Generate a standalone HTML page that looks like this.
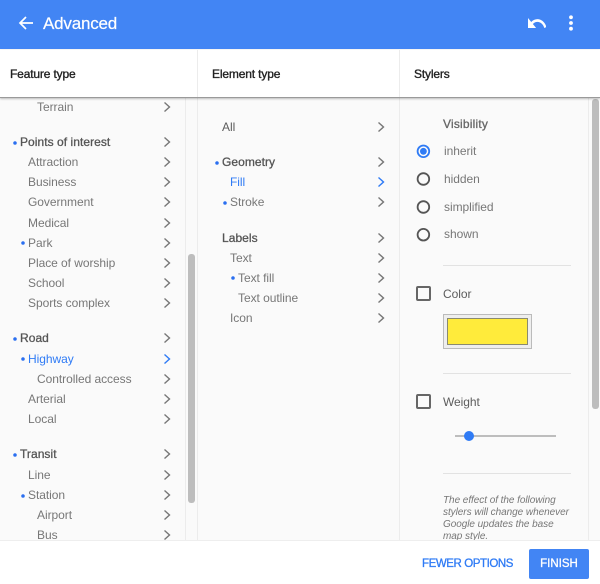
<!DOCTYPE html>
<html><head><meta charset="utf-8"><style>
html,body{margin:0;padding:0}
body{width:600px;height:584px;position:relative;overflow:hidden;background:#fafafa;font-family:"Liberation Sans",sans-serif}
.a{position:absolute}
.hd{left:0;top:0;width:600px;height:49px;background:#4285f4}
.sub{left:0;top:50px;width:600px;height:47px;background:#fff;border-bottom:1px solid #9a9a9a;box-shadow:0 1px 2px rgba(0,0,0,.25);z-index:3}
.h{position:absolute;top:16px;font-size:12px;line-height:16px;color:#222;-webkit-text-stroke:.35px #222;letter-spacing:-.15px}
.v{position:absolute;width:1px;background:#ececec}
.t{position:absolute;font-size:12px;line-height:16px;color:#777;white-space:nowrap;letter-spacing:-.05px}
.b{color:#555;-webkit-text-stroke:.3px #555;letter-spacing:.05px}
.m{color:#5c5c5c}
.blue{color:#2f7bf5}
.d{position:absolute;width:4px;height:4px;border-radius:50%;background:#2a6ff0;transform:scale(.88)}
svg.c{position:absolute;width:8px;height:12px;fill:none;stroke:#777;stroke-width:1.4}
.foot{left:0;top:540px;width:600px;height:44px;background:#fff;border-top:1px solid #eee;z-index:4;box-sizing:border-box}
.sb{position:absolute;background:#bdbdbd;border-radius:3px;width:6.500px}
.rule{position:absolute;left:443px;width:128px;height:1px;background:#e2e2e2}
svg.r{position:absolute;left:416px;width:15px;height:15px;fill:none;stroke:#555;stroke-width:1.800}
.k{position:absolute;left:416px;width:11px;height:11px;border:2px solid #666;border-radius:2px}
</style></head><body>
<div class="a hd"></div>
<svg class="a" style="left:17px;top:14px" width="18" height="18" viewBox="0 0 18 18" fill="none" stroke="#fff" stroke-width="1.7"><path d="M16 9H3M9 3L3 9l6 6"/></svg>
<div class="a" style="left:43px;top:13px;font-size:17px;line-height:21px;color:#fff;letter-spacing:-.2px;-webkit-text-stroke:.2px #fff">Advanced</div>
<svg class="a" style="left:528px;top:18px" width="18" height="10" viewBox="2 7 20 9" preserveAspectRatio="none"><path d="M12.500 8c-2.650 0-5.050.99-6.900 2.600L2 7v9h9l-3.620-3.620c1.390-1.160 3.160-1.880 5.120-1.880 3.540 0 6.550 2.310 7.600 5.500l2.370-.78C21.080 11.030 17.150 8 12.500 8z" fill="#fff"/></svg>
<svg class="a" style="left:567px;top:15px" width="8" height="16" viewBox="0 0 8 16" fill="#fff"><circle cx="4" cy="2.300" r="1.900"/><circle cx="4" cy="8" r="1.900"/><circle cx="4" cy="13.700" r="1.900"/></svg>

<div class="a sub">
<div class="h" style="left:10px">Feature type</div>
<div class="h" style="left:212px">Element type</div>
<div class="h" style="left:414px">Stylers</div>
<div class="v" style="left:197px;top:0;height:47px"></div>
<div class="v" style="left:399px;top:0;height:47px"></div>
</div>

<div class="v" style="left:185px;top:98px;height:442px"></div>
<div class="v" style="left:197px;top:98px;height:442px"></div>
<div class="v" style="left:399px;top:98px;height:442px"></div>
<div class="v" style="left:588px;top:98px;height:442px"></div>
<div class="sb" style="left:188px;top:254px;height:249px"></div>
<div class="sb" style="left:592px;top:99px;height:310px"></div>

<div class="t" style="left:37px;top:99px">Terrain</div>
<div class="t b" style="left:20px;top:134px">Points of interest</div><div class="d" style="left:13px;top:140.500px"></div>
<div class="t" style="left:28px;top:154px">Attraction</div>
<div class="t" style="left:28px;top:174px">Business</div>
<div class="t" style="left:28px;top:194px">Government</div>
<div class="t" style="left:28px;top:215px">Medical</div>
<div class="t" style="left:28px;top:235px">Park</div><div class="d" style="left:21.300px;top:241.300px"></div>
<div class="t" style="left:28px;top:255px">Place of worship</div>
<div class="t" style="left:28px;top:275px">School</div>
<div class="t" style="left:28px;top:295px">Sports complex</div>
<div class="t b" style="left:20px;top:330px">Road</div><div class="d" style="left:13px;top:337.300px"></div>
<div class="t blue" style="left:28px;top:351px">Highway</div><div class="d" style="left:21.300px;top:357.300px"></div>
<div class="t" style="left:37px;top:371px">Controlled access</div>
<div class="t" style="left:28px;top:391px">Arterial</div>
<div class="t" style="left:28px;top:411px">Local</div>
<div class="t b" style="left:20px;top:446px">Transit</div><div class="d" style="left:13px;top:453px"></div>
<div class="t" style="left:28px;top:467px">Line</div>
<div class="t" style="left:28px;top:487px">Station</div><div class="d" style="left:21.300px;top:493.700px"></div>
<div class="t" style="left:37px;top:507px">Airport</div>
<div class="t" style="left:37px;top:527px">Bus</div>

<svg class="c" style="left:163px;top:101px" viewBox="0 0 8 12"><path d="M1.500 1.500L6.500 6l-5 4.500"/></svg>
<svg class="c" style="left:163px;top:136px" viewBox="0 0 8 12"><path d="M1.500 1.500L6.500 6l-5 4.500"/></svg>
<svg class="c" style="left:163px;top:156px" viewBox="0 0 8 12"><path d="M1.500 1.500L6.500 6l-5 4.500"/></svg>
<svg class="c" style="left:163px;top:176px" viewBox="0 0 8 12"><path d="M1.500 1.500L6.500 6l-5 4.500"/></svg>
<svg class="c" style="left:163px;top:196px" viewBox="0 0 8 12"><path d="M1.500 1.500L6.500 6l-5 4.500"/></svg>
<svg class="c" style="left:163px;top:217px" viewBox="0 0 8 12"><path d="M1.500 1.500L6.500 6l-5 4.500"/></svg>
<svg class="c" style="left:163px;top:237px" viewBox="0 0 8 12"><path d="M1.500 1.500L6.500 6l-5 4.500"/></svg>
<svg class="c" style="left:163px;top:257px" viewBox="0 0 8 12"><path d="M1.500 1.500L6.500 6l-5 4.500"/></svg>
<svg class="c" style="left:163px;top:277px" viewBox="0 0 8 12"><path d="M1.500 1.500L6.500 6l-5 4.500"/></svg>
<svg class="c" style="left:163px;top:297px" viewBox="0 0 8 12"><path d="M1.500 1.500L6.500 6l-5 4.500"/></svg>
<svg class="c" style="left:163px;top:332px" viewBox="0 0 8 12"><path d="M1.500 1.500L6.500 6l-5 4.500"/></svg>
<svg class="c" style="left:163px;top:353px;stroke:#2f7bf5" viewBox="0 0 8 12"><path d="M1.500 1.500L6.500 6l-5 4.500"/></svg>
<svg class="c" style="left:163px;top:373px" viewBox="0 0 8 12"><path d="M1.500 1.500L6.500 6l-5 4.500"/></svg>
<svg class="c" style="left:163px;top:393px" viewBox="0 0 8 12"><path d="M1.500 1.500L6.500 6l-5 4.500"/></svg>
<svg class="c" style="left:163px;top:413px" viewBox="0 0 8 12"><path d="M1.500 1.500L6.500 6l-5 4.500"/></svg>
<svg class="c" style="left:163px;top:448px" viewBox="0 0 8 12"><path d="M1.500 1.500L6.500 6l-5 4.500"/></svg>
<svg class="c" style="left:163px;top:469px" viewBox="0 0 8 12"><path d="M1.500 1.500L6.500 6l-5 4.500"/></svg>
<svg class="c" style="left:163px;top:489px" viewBox="0 0 8 12"><path d="M1.500 1.500L6.500 6l-5 4.500"/></svg>
<svg class="c" style="left:163px;top:509px" viewBox="0 0 8 12"><path d="M1.500 1.500L6.500 6l-5 4.500"/></svg>
<svg class="c" style="left:163px;top:529px" viewBox="0 0 8 12"><path d="M1.500 1.500L6.500 6l-5 4.500"/></svg>

<div class="t m" style="left:222px;top:119px">All</div>
<div class="t b" style="left:222px;top:154px">Geometry</div><div class="d" style="left:214.700px;top:160.700px"></div>
<div class="t blue" style="left:230px;top:174px">Fill</div>
<div class="t" style="left:230px;top:194px">Stroke</div><div class="d" style="left:223px;top:201.300px"></div>
<div class="t b" style="left:222px;top:230px">Labels</div>
<div class="t" style="left:230px;top:250px">Text</div>
<div class="t" style="left:238px;top:270px">Text fill</div><div class="d" style="left:231.300px;top:276.300px"></div>
<div class="t" style="left:238px;top:290px">Text outline</div>
<div class="t" style="left:230px;top:310px">Icon</div>

<svg class="c" style="left:377px;top:121px" viewBox="0 0 8 12"><path d="M1.500 1.500L6.500 6l-5 4.500"/></svg>
<svg class="c" style="left:377px;top:156px" viewBox="0 0 8 12"><path d="M1.500 1.500L6.500 6l-5 4.500"/></svg>
<svg class="c" style="left:377px;top:176px;stroke:#2f7bf5" viewBox="0 0 8 12"><path d="M1.500 1.500L6.500 6l-5 4.500"/></svg>
<svg class="c" style="left:377px;top:196px" viewBox="0 0 8 12"><path d="M1.500 1.500L6.500 6l-5 4.500"/></svg>
<svg class="c" style="left:377px;top:232px" viewBox="0 0 8 12"><path d="M1.500 1.500L6.500 6l-5 4.500"/></svg>
<svg class="c" style="left:377px;top:252px" viewBox="0 0 8 12"><path d="M1.500 1.500L6.500 6l-5 4.500"/></svg>
<svg class="c" style="left:377px;top:272px" viewBox="0 0 8 12"><path d="M1.500 1.500L6.500 6l-5 4.500"/></svg>
<svg class="c" style="left:377px;top:292px" viewBox="0 0 8 12"><path d="M1.500 1.500L6.500 6l-5 4.500"/></svg>
<svg class="c" style="left:377px;top:312px" viewBox="0 0 8 12"><path d="M1.500 1.500L6.500 6l-5 4.500"/></svg>

<div class="t b" style="left:443px;top:116px;color:#666;-webkit-text-stroke:.3px #666;letter-spacing:.2px">Visibility</div>
<svg class="r" style="top:144px;stroke:#2f7bf5" viewBox="0 0 15 15"><circle cx="7.400" cy="7.300" r="5.800"/><circle cx="7.400" cy="7.300" r="3.400" fill="#2f7bf5" stroke="none"/></svg>
<div class="t" style="left:444px;top:143px">inherit</div>
<svg class="r" style="top:172px" viewBox="0 0 15 15"><circle cx="7.400" cy="7" r="5.800"/></svg><div class="t" style="left:444px;top:171px">hidden</div>
<svg class="r" style="top:200px" viewBox="0 0 15 15"><circle cx="7.400" cy="7" r="5.800"/></svg><div class="t" style="left:444px;top:199px">simplified</div>
<svg class="r" style="top:228px" viewBox="0 0 15 15"><circle cx="7.400" cy="6.700" r="5.800"/></svg><div class="t" style="left:444px;top:226px">shown</div>
<div class="rule" style="top:265px"></div>
<div class="k" style="top:286px"></div><div class="t m" style="left:443px;top:286px">Color</div>
<div class="a" style="left:443px;top:314px;width:87px;height:33px;background:#eee;border:1px solid #bbb"></div>
<div class="a" style="left:447px;top:318px;width:81px;height:27px;box-sizing:border-box;background:#ffeb3b;border:1px solid #8a8a70"></div>
<div class="rule" style="top:373px"></div>
<div class="k" style="top:394px"></div><div class="t m" style="left:443px;top:394px">Weight</div>
<div class="a" style="left:455px;top:435px;width:101px;height:2px;background:#bdbdbd"></div>
<div class="a" style="left:464px;top:431px;width:10px;height:10px;border-radius:50%;background:#2f7bf5"></div>
<div class="rule" style="top:473px"></div>
<div class="t" style="left:443px;top:495px;font-size:10px;line-height:12px;font-style:italic;letter-spacing:-.05px">The effect of the following<br>stylers will change whenever<br>Google updates the base<br>map style.</div>

<div class="a foot"></div>
<div class="a" style="z-index:5;left:422px;top:556px;font-size:11.500px;line-height:16px;color:#2f7bf5;-webkit-text-stroke:.3px #2f7bf5;letter-spacing:-.42px;white-space:nowrap">FEWER OPTIONS</div>
<div class="a" style="z-index:5;left:529px;top:549px;width:60px;height:30px;background:#4285f4;border-radius:2px;color:#fff;font-size:11.500px;line-height:30px;text-align:center;-webkit-text-stroke:.3px #fff">FINISH</div>
</body></html>
